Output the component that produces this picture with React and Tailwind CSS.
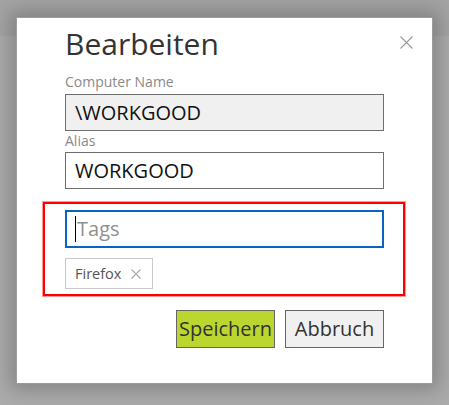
import React from 'react';

const CloseIcon = () => (
  <svg width="13" height="13" viewBox="0 0 13 13" className="block">
    <path d="M0.5 0.5L12.5 12.5M12.5 0.5L0.5 12.5" stroke="#9a9a9a" strokeWidth="1.1" fill="none" />
  </svg>
);

const Field = ({ label, value, bg = 'bg-white', labelTop }) => (
  <>
    <div className={`${labelTop} text-[14px] leading-[18px] text-[#8a8a8a]`}>{label}</div>
    <div className={`mt-[3px] h-[37px] border border-[#6e6e6e] ${bg} pl-[9px] flex items-center text-[20px] text-[#111]`}>
      {value}
    </div>
  </>
);

const App = () => {
  return (
    <div className="min-h-screen bg-[#ababab] relative font-['Open_Sans',sans-serif]">
      <div className="h-9 bg-[#a4a4a4]" />

      <div className="absolute left-4 top-[17px] w-[417px] h-[367px] bg-white border border-[#9c9c9c] shadow-[0_0_18px_6px_rgba(0,0,0,0.22)] px-12">
        <button className="absolute right-[19px] top-[18px]">
          <CloseIcon />
        </button>

        <h1 className="mt-2 h-9 text-[30px] leading-9 text-[#333]">Bearbeiten</h1>

        <Field label="Computer Name" value="\WORKGOOD" bg="bg-[#f0f0f0]" labelTop="mt-[11px]" />
        <div className="mt-px text-[14px] leading-[18px] text-[#8a8a8a]">Alias</div>
        <div className="mt-[2px] h-[37px] border border-[#6e6e6e] bg-white pl-[9px] flex items-center text-[20px] text-[#111]">
          WORKGOOD
        </div>

        <div className="mt-[13px] ml-[-22px] mr-[-21px] border-2 border-[#ff0000] ring-1 ring-[#ff0000]/40 pl-[20px] pr-[19px] pt-[6px] pb-[5px]">
          <div className="h-[38px] border-2 border-[#0a64c4] bg-white pl-[8px] flex items-center text-[20px]">
            <span className="w-px h-[26px] bg-black mr-[1px]" />
            <span className="text-[#8f8f8f]">Tags</span>
          </div>
          <div className="mt-[10px] w-[88px] h-[31px] border border-[#c8c8c8] bg-white flex items-center pl-[9px] gap-[10px] text-[14.5px] text-[#555]">
            <span>Firefox</span>
            <svg width="10" height="10" viewBox="0 0 10 10">
              <path d="M0.5 0.5L9.5 9.5M9.5 0.5L0.5 9.5" stroke="#a8a8a8" strokeWidth="1.1" fill="none" />
            </svg>
          </div>
        </div>

        <div className="mt-[14px] flex justify-end gap-[10px]">
          <button className="w-[99px] h-[38px] border border-[#666] bg-[#bcd630] text-[20px] text-[#333] leading-none">
            Speichern
          </button>
          <button className="w-[99px] h-[38px] border border-[#666] bg-[#f0f0f0] text-[20px] text-[#333] leading-none">
            Abbruch
          </button>
        </div>
      </div>
    </div>
  );
};

export default App;
